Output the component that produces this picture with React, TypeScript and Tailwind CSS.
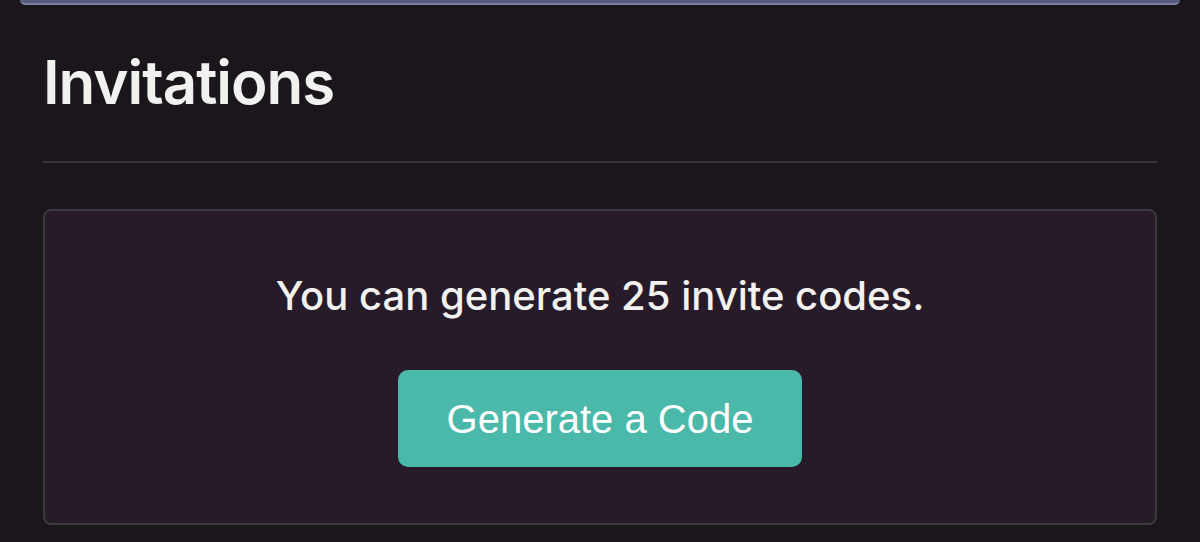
export default function App() {
  return (
    <div className="min-h-[542px] w-[1200px] overflow-hidden bg-[#1b161c] font-['Inter',sans-serif]">
      <div className="mx-[20px] h-[5px] rounded-b-[8px] border-b-2 border-[#7b7fa3] bg-[#565a7c]" />
      <div className="px-[43px]">
        <h1 className="mt-[41px] text-[60px] font-semibold leading-[72px] tracking-[-1px] text-[#f1f2ef]">
          Invitations
        </h1>
        <div className="mt-[43px] h-[2px] bg-[#38323a]" />
        <div className="mt-[46px] flex h-[316px] flex-col items-center rounded-[8px] border-2 border-[#3d3740] bg-[#271b29]">
          <p className="mt-[61px] text-[40px] font-medium leading-[48px] text-[#f1f2ef]">
            You can generate 25 invite codes.
          </p>
          <button
            type="button"
            className="mt-[50px] h-[97px] w-[404px] rounded-[10px] bg-[#4bb9aa] font-['Liberation_Sans',sans-serif] text-[40px] text-white"
          >
            Generate a Code
          </button>
        </div>
      </div>
    </div>
  );
}
